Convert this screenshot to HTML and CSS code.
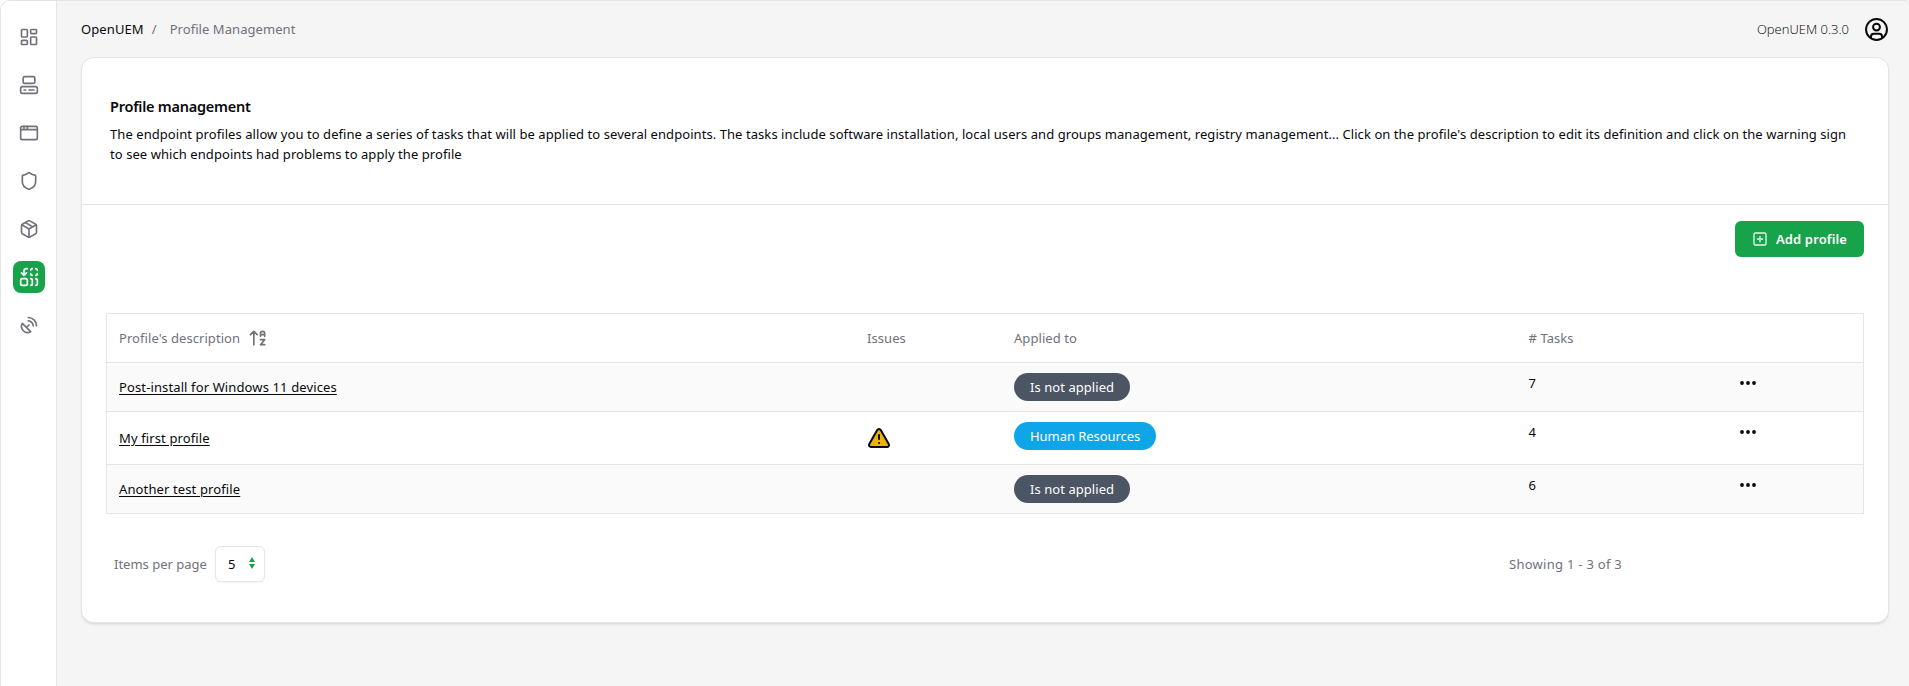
FILE: index.html
```html
<!DOCTYPE html>
<html lang="en">
<head>
<meta charset="utf-8">
<title>OpenUEM</title>
<link rel="stylesheet" href="styles.css">
</head>
<body>
<div class="app">
  <nav class="sidebar">
    <a class="nav"><svg class="icon" viewBox="0 0 24 24"><rect x="3" y="3" width="7" height="9" rx="1"/><rect x="14" y="3" width="7" height="5" rx="1"/><rect x="14" y="12" width="7" height="9" rx="1"/><rect x="3" y="16" width="7" height="5" rx="1"/></svg></a>
    <a class="nav"><svg class="icon" viewBox="0 0 24 24"><rect x="5" y="2" width="14" height="8" rx="2"/><rect x="2" y="14" width="20" height="8" rx="2"/><path d="M6 18h2M12 18h6"/></svg></a>
    <a class="nav"><svg class="icon" viewBox="0 0 24 24"><rect x="2" y="4" width="20" height="16" rx="2"/><path d="M10 4v4M2 8h20M6 4v4"/></svg></a>
    <a class="nav"><svg class="icon" viewBox="0 0 24 24"><path d="M20 13c0 5-3.500 7.500-7.660 8.950a1 1 0 0 1-.670-.010C7.500 20.500 4 18 4 13V6a1 1 0 0 1 1-1c2 0 4.500-1.200 6.240-2.720a1.170 1.170 0 0 1 1.520 0C14.510 3.810 17 5 19 5a1 1 0 0 1 1 1z"/></svg></a>
    <a class="nav"><svg class="icon" viewBox="0 0 24 24"><path d="M11 21.730a2 2 0 0 0 2 0l7-4A2 2 0 0 0 21 16V8a2 2 0 0 0-1-1.730l-7-4a2 2 0 0 0-2 0l-7 4A2 2 0 0 0 3 8v8a2 2 0 0 0 1 1.730z"/><path d="M12 22V12M3.300 7 12 12l8.700-5M7.500 4.270l9 5.150"/></svg></a>
    <a class="nav nav-active"><svg class="icon" viewBox="0 0 24 24"><path d="M14 4a2 2 0 0 1 2-2M16 10a2 2 0 0 1-2-2M20 2a2 2 0 0 1 2 2M22 8a2 2 0 0 1-2 2M14 14a2 2 0 0 1 2 2v4a2 2 0 0 1-2 2M20 14a2 2 0 0 1 2 2v4a2 2 0 0 1-2 2M3 7l3 3 3-3M6 10V5a3 3 0 0 1 3-3h1"/><rect x="2" y="14" width="8" height="8" rx="2"/></svg></a>
    <a class="nav"><svg class="icon" viewBox="0 0 24 24"><path d="M4 10a7.310 7.310 0 0 0 10 10ZM9 15l3-3M17 13a6 6 0 0 0-6-6M21 13A10 10 0 0 0 11 3"/></svg></a>
  </nav>
  <div class="content">
    <header class="topbar">
      <div class="crumbs"><span class="crumb-root">OpenUEM</span><span>/</span><span class="crumb-page">Profile Management</span></div>
      <div class="account"><span class="version">OpenUEM 0.3.0</span>
        <svg class="avatar" viewBox="0 0 24 24"><circle cx="12" cy="12" r="10.900"/><circle cx="12" cy="9.500" r="3.600"/><path d="M6.200 20.800v-1.300a3 3 0 0 1 3-3h5.600a3 3 0 0 1 3 3v1.300"/></svg>
      </div>
    </header>
    <main class="card">
      <section class="intro">
        <h1>Profile management</h1>
        <p>The endpoint profiles allow you to define a series of tasks that will be applied to several endpoints. The tasks include software installation, local users and groups management, registry management... Click on the profile's description to edit its definition and click on the warning sign<br>to see which endpoints had problems to apply the profile</p>
      </section>
      <div class="actions">
        <button class="add"><svg class="add-icon" viewBox="0 0 24 24"><rect x="3" y="3" width="18" height="18" rx="2"/><path d="M8 12h8M12 8v8"/></svg>Add profile</button>
      </div>
      <div class="table">
        <div class="row head">
          <div class="cell sortable">Profile's description
            <svg class="sort" viewBox="0 0 24 24"><path d="M3 8l4-4 4 4M7 4v16M20 8h-5M15 10V6.500a2.500 2.500 0 0 1 5 0V10M15 14h5l-5 6h5"/></svg></div>
          <div class="cell">Issues</div><div class="cell">Applied to</div><div class="cell"># Tasks</div><div class="cell"></div>
        </div>
        <div class="row striped">
          <div class="cell"><a class="link">Post-install for Windows 11 devices</a></div><div class="cell"></div>
          <div class="cell top"><span class="pill">Is not applied</span></div><div class="cell top num">7</div>
          <div class="cell top"><svg class="more" viewBox="0 0 16 4"><circle cx="2" cy="2" r="1.900"/><circle cx="8" cy="2" r="1.900"/><circle cx="14" cy="2" r="1.900"/></svg></div>
        </div>
        <div class="row tall">
          <div class="cell"><a class="link">My first profile</a></div>
          <div class="cell"><svg class="warn" viewBox="0 0 24 24"><path class="warn-shape" d="M21.730 18l-8-14a2 2 0 0 0-3.480 0l-8 14A2 2 0 0 0 4 21h16a2 2 0 0 0 1.730-3"/><path d="M12 9v4M12 17h.010"/></svg></div>
          <div class="cell top"><span class="pill pill-blue">Human Resources</span></div><div class="cell top num">4</div>
          <div class="cell top"><svg class="more" viewBox="0 0 16 4"><circle cx="2" cy="2" r="1.900"/><circle cx="8" cy="2" r="1.900"/><circle cx="14" cy="2" r="1.900"/></svg></div>
        </div>
        <div class="row striped">
          <div class="cell"><a class="link">Another test profile</a></div><div class="cell"></div>
          <div class="cell top"><span class="pill">Is not applied</span></div><div class="cell top num">6</div>
          <div class="cell top"><svg class="more" viewBox="0 0 16 4"><circle cx="2" cy="2" r="1.900"/><circle cx="8" cy="2" r="1.900"/><circle cx="14" cy="2" r="1.900"/></svg></div>
        </div>
      </div>
      <footer class="pager">
        <div class="per-page"><span>Items per page</span>
          <div class="select">5<svg class="arrows" viewBox="0 0 6 12"><path d="M0 5 3 0l3 5zM0 7l3 5 3-5z"/></svg></div>
        </div>
        <span class="showing">Showing 1 - 3 of 3</span>
      </footer>
    </main>
  </div>
</div>
</body>
</html>
```
FILE: styles.css
```css
* { box-sizing: border-box; }
body {
  margin: 0;
  background: #fff;
  color: #09090b;
  font: 13px/20px "Noto Sans", "Open Sans", sans-serif;
  letter-spacing: 0.06px;
}
svg { display: block; flex: none; fill: none; stroke: currentColor; stroke-width: 2; stroke-linecap: round; stroke-linejoin: round; }
.app {
  display: flex;
  height: 686px;
  background: #f5f5f5;
  border: 1px solid #e5e5e5;
  border-width: 1px 0 0 1px;
  border-radius: 10px 4px 0 0;
  overflow: hidden;
}
.sidebar {
  flex: none;
  width: 56px;
  padding: 20px 0 0 12px;
  background: #fff;
  border-right: 1px solid #e5e5e5;
  display: flex;
  flex-direction: column;
  gap: 16px;
  color: #71717a;
}
.nav { width: 32px; height: 32px; display: grid; place-items: center; border-radius: 8px; }
.nav-active { background: #16a34a; color: #fff; }
.icon { width: 20px; height: 20px; }
.content { flex: 1; min-width: 0; padding: 0 21px 0 25px; }
.topbar { height: 57px; padding-bottom: 1px; display: flex; justify-content: space-between; align-items: center; color: #71717a; }
.crumbs { display: flex; margin: -1px 0 0 -1px; }
.crumb-root { color: #09090b; margin-right: 8px; letter-spacing: 0.1px; }
.crumb-page { margin-left: 13px; }
.account { display: flex; align-items: center; gap: 16px; color: #09090b; }
.version { margin-top: -1px; font-family: "Open Sans", sans-serif; font-weight: 300; letter-spacing: 0; color: #000; }
.avatar { width: 23px; height: 23px; stroke-width: 2.100; }
.card {
  height: 564px;
  background: #fff;
  border-radius: 12px;
  box-shadow: 0 0 0 1px #e5e5e5, 0 2px 3px rgba(0, 0, 0, 0.15);
}
.intro { height: 147px; padding: 36px 28px 0; border-bottom: 1px solid #e5e5e5; }
h1 { margin: 0; font-size: 14.500px; line-height: 24px; font-weight: 600; letter-spacing: -0.240px; }
p { margin: 6px 0 0; white-space: nowrap; letter-spacing: 0.066px; }
.actions { display: flex; justify-content: flex-end; padding: 16px 24px 0; height: 108px; }
.add {
  display: flex; align-items: center; gap: 8px;
  width: 129px; height: 36px; padding: 0 0 0 17px;
  border: 0; border-radius: 6px;
  background: #16a34a; color: #fff;
  font: 600 13px/20px "Noto Sans", sans-serif; letter-spacing: 0.120px;
}
.add-icon { width: 16px; height: 16px; stroke-width: 2; opacity: 0.9; }
.table { margin: 0 24px; border: 1px solid #e5e5e5; }
.row { display: grid; grid-template-columns: 748px 147px 514.500px 211.500px 1fr; height: 49px; border-bottom: 1px solid #e5e5e5; }
.row:last-child { border-bottom: 0; height: 48px; }
.tall { height: 53px; }
.striped { background: #fafafa; }
.head { color: #71717a; }
.cell { display: flex; align-items: center; padding: 0 12px; }
.top { align-items: flex-start; padding-top: 10px; }
.num { padding-top: 10px; }
.sort { width: 20px; height: 20px; margin-left: 8px; }
.link { text-decoration: underline; text-underline-offset: 2px; letter-spacing: 0.120px; }
.pill { height: 28px; padding: 4px 16px; border-radius: 14px; background: #4b5563; color: #fff; }
.pill-blue { background: #0ea5e9; letter-spacing: -0.060px; }
.more { width: 16px; height: 4px; margin-top: 8px; fill: currentColor; stroke: none; }
.warn { width: 24px; height: 24px; }
.warn-shape { fill: #eab308; }
.pager { display: flex; justify-content: space-between; align-items: center; padding: 32px 266px 0 32px; color: #71717a; }
.per-page { display: flex; align-items: center; gap: 8px; letter-spacing: 0; }
.select {
  width: 50px; height: 36px; padding: 0 9px 0 12px;
  display: flex; align-items: center; justify-content: space-between;
  border: 1px solid #e5e5e5; border-radius: 6px; color: #09090b;
  box-shadow: 0 1px 2px rgba(0, 0, 0, 0.05);
}
.arrows { width: 6px; height: 12px; fill: #16a34a; stroke: none; margin-bottom: 2px; }
.showing { letter-spacing: 0.270px; }
```
